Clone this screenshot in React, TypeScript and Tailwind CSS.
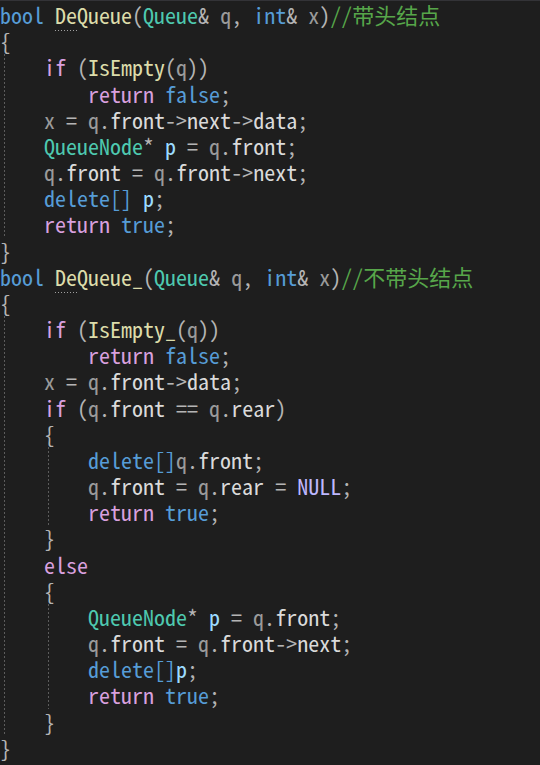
import React from "react";

type Tok = [string, string];

const C: Record<string, string> = {
  kw: "text-[#569cd6]",
  ct: "text-[#d8a0df]",
  ty: "text-[#4ec9b0]",
  fn: "text-[#dcdcaa]",
  pa: "text-[#9a9a9a]",
  lo: "text-[#9cdcfe]",
  me: "text-[#dadada]",
  op: "text-[#b4b4b4]",
  cm: "text-[#57a64a]",
  ma: "text-[#beb7ff]",
  pl: "text-[#dcdcdc]",
};

const L: Tok[][] = [
  [["bool", "kw"], [" ", "pl"], ["De", "fnu"], ["Queue", "fn"], ["(", "op"], ["Queue", "ty"], ["&", "op"], [" ", "pl"], ["q", "pa"], [",", "op"], [" ", "pl"], ["int", "kw"], ["&", "op"], [" ", "pl"], ["x", "pa"], [")", "op"], ["//带头结点", "cm"]],
  [["{", "op"]],
  [["    ", "pl"], ["if", "ct"], [" (", "op"], ["IsEmpty", "fn"], ["(", "op"], ["q", "pa"], ["))", "op"]],
  [["        ", "pl"], ["return", "ct"], [" ", "pl"], ["false", "kw"], [";", "op"]],
  [["    ", "pl"], ["x", "pa"], [" = ", "op"], ["q", "pa"], [".", "op"], ["front", "me"], ["->", "op"], ["next", "me"], ["->", "op"], ["data", "me"], [";", "op"]],
  [["    ", "pl"], ["QueueNode", "ty"], ["*", "op"], [" ", "pl"], ["p", "lo"], [" = ", "op"], ["q", "pa"], [".", "op"], ["front", "me"], [";", "op"]],
  [["    ", "pl"], ["q", "pa"], [".", "op"], ["front", "me"], [" = ", "op"], ["q", "pa"], [".", "op"], ["front", "me"], ["->", "op"], ["next", "me"], [";", "op"]],
  [["    ", "pl"], ["delete[]", "kw"], [" ", "pl"], ["p", "lo"], [";", "op"]],
  [["    ", "pl"], ["return", "ct"], [" ", "pl"], ["true", "kw"], [";", "op"]],
  [["}", "op"]],
  [["bool", "kw"], [" ", "pl"], ["De", "fnu"], ["Queue_", "fn"], ["(", "op"], ["Queue", "ty"], ["&", "op"], [" ", "pl"], ["q", "pa"], [",", "op"], [" ", "pl"], ["int", "kw"], ["&", "op"], [" ", "pl"], ["x", "pa"], [")", "op"], ["//不带头结点", "cm"]],
  [["{", "op"]],
  [["    ", "pl"], ["if", "ct"], [" (", "op"], ["IsEmpty_", "fn"], ["(", "op"], ["q", "pa"], ["))", "op"]],
  [["        ", "pl"], ["return", "ct"], [" ", "pl"], ["false", "kw"], [";", "op"]],
  [["    ", "pl"], ["x", "pa"], [" = ", "op"], ["q", "pa"], [".", "op"], ["front", "me"], ["->", "op"], ["data", "me"], [";", "op"]],
  [["    ", "pl"], ["if", "ct"], [" (", "op"], ["q", "pa"], [".", "op"], ["front", "me"], [" == ", "op"], ["q", "pa"], [".", "op"], ["rear", "me"], [")", "op"]],
  [["    ", "pl"], ["{", "op"]],
  [["        ", "pl"], ["delete[]", "kw"], ["q", "pa"], [".", "op"], ["front", "me"], [";", "op"]],
  [["        ", "pl"], ["q", "pa"], [".", "op"], ["front", "me"], [" = ", "op"], ["q", "pa"], [".", "op"], ["rear", "me"], [" = ", "op"], ["NULL", "ma"], [";", "op"]],
  [["        ", "pl"], ["return", "ct"], [" ", "pl"], ["true", "kw"], [";", "op"]],
  [["    ", "pl"], ["}", "op"]],
  [["    ", "pl"], ["else", "ct"]],
  [["    ", "pl"], ["{", "op"]],
  [["        ", "pl"], ["QueueNode", "ty"], ["*", "op"], [" ", "pl"], ["p", "lo"], [" = ", "op"], ["q", "pa"], [".", "op"], ["front", "me"], [";", "op"]],
  [["        ", "pl"], ["q", "pa"], [".", "op"], ["front", "me"], [" = ", "op"], ["q", "pa"], [".", "op"], ["front", "me"], ["->", "op"], ["next", "me"], [";", "op"]],
  [["        ", "pl"], ["delete[]", "kw"], ["p", "lo"], [";", "op"]],
  [["        ", "pl"], ["return", "ct"], [" ", "pl"], ["true", "kw"], [";", "op"]],
  [["    ", "pl"], ["}", "op"]],
  [["}", "op"]],
];

const LH = 26.18;

const guides: { x: number; from: number; to: number }[] = [
  { x: 4, from: 3, to: 9 },
  { x: 4, from: 13, to: 28 },
  { x: 48, from: 18, to: 20 },
  { x: 48, from: 24, to: 27 },
];

export default function App() {
  return (
    <div className="w-[540px] h-[765px] overflow-hidden bg-[#1e1e1e] border-t border-[#333337]">
      <div className="relative font-['Noto_Sans_Mono_CJK_SC','Liberation_Mono',monospace] text-[22px] leading-[26.18px] whitespace-pre">
        {guides.map((g, i) => (
          <div
            key={i}
            className="absolute w-px bg-[repeating-linear-gradient(to_bottom,#5c5c5c_0px,#5c5c5c_2px,transparent_2px,transparent_4px)]"
            style={{ left: g.x, top: 1 + LH * (g.from - 1), height: LH * (g.to - g.from + 1) }}
          />
        ))}
        {L.map((line, i) => (
          <div key={i} className="h-[26.18px]">
            {line.map(([t, c], j) =>
              c === "fnu" ? (
                <span key={j} className="relative text-[#dcdcaa]">
                  {t}
                  <span className="absolute left-0 right-0 bottom-[-1px] h-px bg-[repeating-linear-gradient(to_right,#a0a0a0_0px,#a0a0a0_1px,transparent_1px,transparent_3px)]" />
                </span>
              ) : (
                <span key={j} className={C[c]}>
                  {t}
                </span>
              )
            )}
          </div>
        ))}
      </div>
    </div>
  );
}
